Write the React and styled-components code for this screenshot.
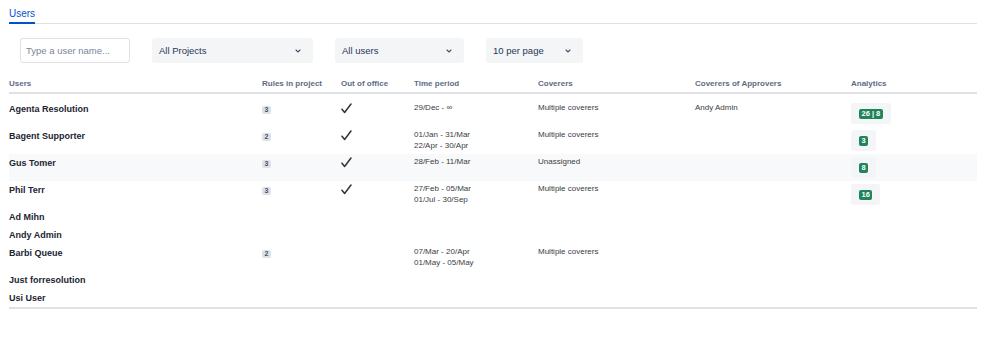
import React from 'react';
import styled, {createGlobalStyle} from 'styled-components';

const GlobalStyle = createGlobalStyle`
  body {
    margin: 0;
    background: #fff;
    font-family: "Liberation Sans", Arial, sans-serif;
    color: #172b4d;
  }
`;

const COLUMNS = '253px 79px 73px 124px 157px 156px 126px';

const users = [
  {name: 'Agenta Resolution', rules: 3, ooo: true, periods: ['29/Dec - ∞'], coverers: 'Multiple coverers', approvers: 'Andy Admin', analytics: '26 | 8'},
  {name: 'Bagent Supporter', rules: 2, ooo: true, periods: ['01/Jan - 31/Mar', '22/Apr - 30/Apr'], coverers: 'Multiple coverers', analytics: '3'},
  {name: 'Gus Tomer', rules: 3, ooo: true, periods: ['28/Feb - 11/Mar'], coverers: 'Unassigned', analytics: '8', shaded: true},
  {name: 'Phil Terr', rules: 3, ooo: true, periods: ['27/Feb - 05/Mar', '01/Jul - 30/Sep'], coverers: 'Multiple coverers', analytics: '16'},
  {name: 'Ad Mihn'},
  {name: 'Andy Admin'},
  {name: 'Barbi Queue', rules: 2, periods: ['07/Mar - 20/Apr', '01/May - 05/May'], coverers: 'Multiple coverers'},
  {name: 'Just forresolution'},
  {name: 'Usi User'},
];

const Page = styled.div`
  padding: 0 22px 0 9px;
  width: 968px;
`;

const Tabs = styled.div`
  display: flex;
  border-bottom: 1px solid #dfe1e6;
`;

const Tab = styled.div`
  font-size: 10px;
  color: #0052cc;
  padding: 9px 0 3px;
  line-height: 10px;
  border-bottom: 2px solid #0052cc;
  margin-bottom: -1px;
`;

const Toolbar = styled.div`
  display: flex;
  gap: 22px;
  padding: 14px 0 0 11px;
`;

const SearchInput = styled.input`
  box-sizing: border-box;
  width: 110px;
  height: 25px;
  border: 1.5px solid #dfe1e6;
  border-radius: 3px;
  padding: 0 5px;
  font-family: "Liberation Sans", Arial, sans-serif;
  font-size: 9.5px;
  color: #172b4d;
  &::placeholder {
    color: #7a869a;
  }
`;

const Select = styled.div`
  box-sizing: border-box;
  width: ${p => p.$w}px;
  height: 25px;
  background: #f4f5f7;
  border-radius: 3px;
  display: flex;
  align-items: center;
  justify-content: space-between;
  padding: 0 12px 0 7px;
  font-size: 9.5px;
  color: #253858;
`;

const Chevron = () => (
  <svg width="6" height="4" viewBox="0 0 6 4">
    <path d="M1 1l2 2 2-2" fill="none" stroke="#42526e" strokeWidth="1.1" strokeLinecap="round" />
  </svg>
);

const HeadRow = styled.div`
  display: grid;
  grid-template-columns: ${COLUMNS};
  margin-top: 15px;
  padding-bottom: 2px;
  border-bottom: 2px solid #dfe1e6;
`;

const HeadCell = styled.div`
  font-size: 8px;
  font-weight: bold;
  color: #5e6c84;
  line-height: 12px;
`;

const Body = styled.div`
  padding-top: 6px;
  border-bottom: 2px solid #dfe1e6;
`;

const Row = styled.div`
  display: grid;
  grid-template-columns: ${COLUMNS};
  padding: 3px 0;
  background: ${p => (p.$shaded ? '#f8f9fa' : 'transparent')};
  align-items: start;
`;

const Name = styled.div`
  font-size: 9px;
  font-weight: bold;
  line-height: 12px;
  color: #1d2433;
`;

const Cell = styled.div`
  font-size: 8px;
  line-height: 11px;
  color: #3a3d42;
  margin-top: -1px;
`;

const RuleBadge = styled.div`
  width: fit-content;
  margin-top: 3px;
  background: #dfe1e6;
  color: #42526e;
  font-size: 7px;
  font-weight: bold;
  line-height: 8px;
  padding: 0 2.5px;
  border-radius: 2px;
`;

const Check = () => (
  <svg width="11" height="11" viewBox="0 0 11 11" display="block">
    <path d="M1 6.2l2.6 3.3L10 1" fill="none" stroke="#333" strokeWidth="1.5" strokeLinecap="round" strokeLinejoin="round" />
  </svg>
);

const StatBox = styled.div`
  width: fit-content;
  background: #f4f5f7;
  border-radius: 3px;
  padding: 6px 8px 5px 8px;
`;

const StatBadge = styled.div`
  background: #1f845a;
  color: #fff;
  font-size: 7.5px;
  font-weight: bold;
  line-height: 10px;
  padding: 0 2.5px;
  border-radius: 2px;
  white-space: pre;
`;

export default function App() {
  return (
    <Page>
      <GlobalStyle />
      <Tabs>
        <Tab>Users</Tab>
      </Tabs>
      <Toolbar>
        <SearchInput placeholder="Type a user name..." />
        <Select $w={161}>All Projects<Chevron /></Select>
        <Select $w={129}>All users<Chevron /></Select>
        <Select $w={97}>10 per page<Chevron /></Select>
      </Toolbar>
      <HeadRow>
        {['Users', 'Rules in project', 'Out of office', 'Time period', 'Coverers', 'Coverers of Approvers', 'Analytics'].map(h => (
          <HeadCell key={h}>{h}</HeadCell>
        ))}
      </HeadRow>
      <Body>
        {users.map(u => (
          <Row key={u.name} $shaded={u.shaded}>
            <Name>{u.name}</Name>
            <div>{u.rules ? <RuleBadge>{u.rules}</RuleBadge> : null}</div>
            <div>{u.ooo ? <Check /> : null}</div>
            <Cell>
              {(u.periods || []).map(p => (
                <div key={p}>{p}</div>
              ))}
            </Cell>
            <Cell>{u.coverers}</Cell>
            <Cell>{u.approvers}</Cell>
            <div>
              {u.analytics ? (
                <StatBox>
                  <StatBadge>{u.analytics}</StatBadge>
                </StatBox>
              ) : null}
            </div>
          </Row>
        ))}
      </Body>
    </Page>
  );
}
